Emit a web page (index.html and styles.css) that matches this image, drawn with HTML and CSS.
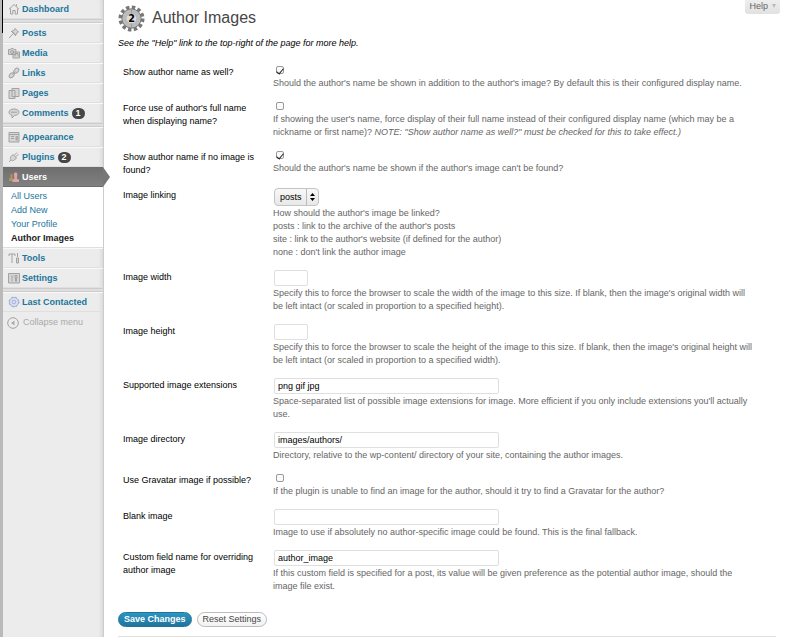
FILE: index.html
```html
<!DOCTYPE html>
<html lang="en">
<head>
<meta charset="utf-8">
<title>Author Images</title>
<link rel="stylesheet" href="styles.css">
</head>
<body>
<nav class="sidebar" aria-label="Main menu">
  <ul class="menu">
    <li><a href="#"><svg class="icon" viewBox="0 0 12 12"><path d="M1 6.2 6 1.5l5 4.7M2.5 5.5V11h2.3V7.5h2.4V11h2.3V5.5"/><path d="M8.5 1.2v2"/></svg>Dashboard</a></li>
    <li class="separator"></li>
    <li><a href="#"><svg class="icon" viewBox="0 0 12 12"><path class="tint" d="M7 1.5 10.5 5 9 5.5 7.8 8 4 4.200l2.500-1.200z"/><path d="M3 4l5 5M5 7 1 11"/></svg>Posts</a></li>
    <li><a href="#"><svg class="icon" viewBox="0 0 12 12"><path class="tint" d="M.5 2.500h2l.7-1h2l.7 1h2v5h-7.400zM5 5h6.500v6H5z"/><circle cx="4" cy="5" r="1.500"/><path d="M7 9.500V6.500h3v3"/></svg>Media</a></li>
    <li><a href="#"><svg class="icon" viewBox="0 0 12 12"><ellipse class="tint" cx="8.300" cy="3.700" rx="3" ry="1.900" transform="rotate(-45 8.300 3.700)"/><ellipse class="tint" cx="3.700" cy="8.300" rx="3" ry="1.900" transform="rotate(-45 3.700 8.300)"/><path d="m4.500 7.500 3-3"/></svg>Links</a></li>
    <li><a href="#"><svg class="icon" viewBox="0 0 12 12"><path class="tint" d="M1 3.500h6v8H1zM4 1.500h7v8H4z"/></svg>Pages</a></li>
    <li><a href="#"><svg class="icon" viewBox="0 0 12 12"><path class="tint" d="M6 2c3 0 5 1.300 5 3.200S9 8.500 6.500 8.500L4 11V8.300C2 7.800 1 6.700 1 5.200 1 3.300 3 2 6 2z"/><path d="M3 5.200h6"/></svg>Comments <span class="badge">1</span></a></li>
    <li class="separator"></li>
    <li><a href="#"><svg class="icon" viewBox="0 0 12 12"><path class="tint" d="M1 1.500h10v9.500H1z"/><path d="M1 3.500h10M3 5.500h3M3 7.500h3"/><path class="fill" d="M7.500 5h2.500v4.500H7.500z"/></svg>Appearance</a></li>
    <li><a href="#"><svg class="icon" viewBox="0 0 12 12"><path class="tint" d="M5 3.500 8.500 7 6.500 9C5 10 3.500 9.500 3 9S2 7 3 5.500z"/><path d="M6 4.500 9 1.500M7.500 6l3-3M3 9l-2 2"/></svg>Plugins <span class="badge">2</span></a></li>
    <li class="current"><a href="#" aria-current="true"><svg class="icon users" viewBox="0 0 12 12"><path class="back" d="M1 10V8l1.500-1.500V3h2v4L6 10z"/><path class="front" d="M4.500 11V8.800L6.500 7.500 6 5V2.500C6.300 1 9 1 9.300 2.500V5l-.5 2.500 2.200 1.300V11z"/></svg>Users</a>
      <ul class="submenu">
        <li><a href="#">All Users</a></li>
        <li><a href="#">Add New</a></li>
        <li><a href="#">Your Profile</a></li>
        <li><a href="#" class="selected">Author Images</a></li>
      </ul>
    </li>
    <li><a href="#"><svg class="icon" viewBox="0 0 12 12"><path d="M1 4V2h6v2M4 2v9"/><path class="tint" d="M9.500 1v4M8.500 6h2v5h-2z"/></svg>Tools</a></li>
    <li><a href="#"><svg class="icon" viewBox="0 0 12 12"><path class="tint" d="M.5 1.500h11v9.500H.5z"/><path d="M3 3.500l1 1 1-1M4 4.500V9.500M7.500 9.500V6M7 3.500h2v2.500H7zM8.500 6v3.500"/></svg>Settings</a></li>
    <li class="separator"></li>
    <li><a href="#"><svg class="icon gear" viewBox="0 0 12 12"><circle cx="6" cy="6" r="4.500"/><circle class="teeth" cx="6" cy="6" r="5"/><circle cx="6" cy="6" r="1.800"/></svg>Last Contacted</a></li>
  </ul>
  <button type="button" class="collapse"><svg class="icon" viewBox="0 0 12 12"><circle cx="6" cy="6" r="5.300"/><path class="fill" d="M7.500 3.500v5L4 6z"/></svg>Collapse menu</button>
</nav>
<main class="content">
  <button type="button" class="help">Help <span class="caret"></span></button>
  <header class="heading">
    <svg class="logo" viewBox="0 0 28 28" aria-hidden="true"><circle class="cogs" cx="14" cy="14" r="11.500"/><circle class="disc" cx="14" cy="14" r="10"/><path class="split" d="M14 4v5M14 19v5"/><circle class="hub" cx="14" cy="14" r="5"/><text x="14" y="17.500">2</text></svg>
    <h1>Author Images</h1>
  </header>
  <p class="intro">See the "Help" link to the top-right of the page for more help.</p>
  <form>
    <div class="row"><label for="show">Show author name as well?</label><div class="field"><div class="check"><input type="checkbox" id="show" checked></div><p>Should the author's name be shown in addition to the author's image? By default this is their configured display name.</p></div></div>
    <div class="row"><label for="force">Force use of author's full name when displaying name?</label><div class="field"><div class="check"><input type="checkbox" id="force"></div><p>If showing the user's name, force display of their full name instead of their configured display name (which may be a nickname or first name)? <em>NOTE: "Show author name as well?" must be checked for this to take effect.)</em></p></div></div>
    <div class="row"><label for="noimage">Show author name if no image is found?</label><div class="field"><div class="check"><input type="checkbox" id="noimage" checked></div><p>Should the author's name be shown if the author's image can't be found?</p></div></div>
    <div class="row"><label for="linking">Image linking</label><div class="field"><div class="picker"><select id="linking"><option>posts</option><option>site</option><option>none</option></select><svg viewBox="0 0 5 8" aria-hidden="true"><path d="M0 3 2.500 0 5 3zM0 5l2.500 3L5 5z"/></svg></div><p>How should the author's image be linked?<br>posts : link to the archive of the author's posts<br>site : link to the author's website (if defined for the author)<br>none : don't link the author image</p></div></div>
    <div class="row"><label for="width">Image width</label><div class="field"><input class="text short" type="text" id="width"><p>Specify this to force the browser to scale the width of the image to this size. If blank, then the image's original width will be&nbsp;left&nbsp;intact (or scaled in proportion to a specified height).</p></div></div>
    <div class="row"><label for="height">Image height</label><div class="field"><input class="text short" type="text" id="height"><p>Specify this to force the browser to scale the height of the image to this size. If blank, then the image's original height will be&nbsp;left&nbsp;intact (or scaled in proportion to a specified width).</p></div></div>
    <div class="row"><label for="ext">Supported image extensions</label><div class="field"><input class="text" type="text" id="ext" value="png gif jpg"><p>Space-separated list of possible image extensions for image. More efficient if you only include extensions you'll actually use.</p></div></div>
    <div class="row"><label for="dir">Image directory</label><div class="field"><input class="text" type="text" id="dir" value="images/authors/"><p>Directory, relative to the wp-content/ directory of your site, containing the author images.</p></div></div>
    <div class="row"><label for="gravatar">Use Gravatar image if possible?</label><div class="field"><div class="check"><input type="checkbox" id="gravatar"></div><p>If the plugin is unable to find an image for the author, should it try to find a Gravatar for the author?</p></div></div>
    <div class="row"><label for="blank">Blank image</label><div class="field"><input class="text" type="text" id="blank"><p>Image to use if absolutely no author-specific image could be found. This is the final fallback.</p></div></div>
    <div class="row"><label for="custom">Custom field name for overriding author image</label><div class="field"><input class="text" type="text" id="custom" value="author_image"><p>If this custom field is specified for a post, its value will be given preference as the potential author image, should the image&nbsp;file&nbsp;exist.</p></div></div>
    <div class="actions"><button type="submit" class="primary">Save Changes</button><button type="reset">Reset Settings</button></div>
  </form>
</main>
</body>
</html>
```
FILE: styles.css
```css
* { box-sizing: border-box; }
body {
  margin: 0;
  display: flex;
  min-height: 100vh;
  overflow: hidden;
  background: #fff;
  color: #000;
  font: 9px/13px "Liberation Sans", Arial, sans-serif;
}
ul { margin: 0; padding: 0; list-style: none; }
p { margin: 0; }
a { text-decoration: none; color: #21759b; }
button, input, select { font: inherit; color: inherit; margin: 0; }

.sidebar {
  position: relative;
  flex: none;
  width: 104px;
  border-left: 3px solid #bababa;
  border-right: 1px solid #ccc;
  background: #ececec;
  box-shadow: inset -4px 0 4px -3px #d0d0d0;
}
.sidebar::before {
  content: "";
  position: absolute;
  left: -1px;
  top: 0;
  width: 1px;
  height: 33px;
  background: #000;
}
.menu > li > a {
  display: flex;
  align-items: center;
  gap: 2px;
  height: 20px;
  padding-left: 5px;
  border-top: 1px solid #f9f9f9;
  border-bottom: 1px solid #dfdfdf;
  font-weight: bold;
}
.menu > li:first-child > a { height: 19px; border-top: 0; }
.separator {
  height: 4px;
  background: #dfdfdf;
  border-top: 1px solid #ccc;
  border-bottom: 1px solid #ccc;
}
.icon {
  flex: none;
  width: 12px;
  height: 12px;
  fill: none;
  stroke: #a2a2a2;
  stroke-width: 1;
}
.icon .tint { fill: #d6d6d6; }
.icon .fill { fill: #aaa; stroke: none; }
.gear { stroke: #a4b1d4; fill: #dbe1f2; }
.gear .teeth { stroke-dasharray: 2 2; fill: none; }
.users { stroke: none; }
.users .back { fill: #a89a58; }
.users .front { fill: #e0a3a0; }
.badge {
  height: 11px;
  margin-left: 1px;
  padding: 0 4px;
  border-radius: 6px;
  background: #464646;
  color: #fff;
  line-height: 11px;
}
.menu > .current > a {
  position: relative;
  background: linear-gradient(#6f6f6f, #808080);
  border-color: #6d6d6d;
  color: #fff;
}
.current > a::after {
  content: "";
  position: absolute;
  left: 100%;
  top: -1px;
  border: solid transparent;
  border-width: 10px 0 10px 7px;
  border-left-color: #777;
}
.submenu {
  padding: 2px 0;
  background: #fff;
  border-bottom: 1px solid #dfdfdf;
}
.submenu a { display: block; padding-left: 8px; line-height: 14px; }
.submenu .selected { color: #222; font-weight: bold; }
.collapse {
  display: flex;
  align-items: center;
  gap: 4px;
  height: 21px;
  padding: 0 4px;
  border: 0;
  background: none;
  color: #aaa;
}

.content {
  position: relative;
  flex: 1;
  min-width: 0;
  padding: 4px 10px 0 14px;
}
.help {
  position: absolute;
  top: 0;
  right: 12px;
  display: flex;
  align-items: center;
  gap: 4px;
  height: 14px;
  padding: 0 4px 2px;
  border: 0;
  border-radius: 0 0 3px 3px;
  background: linear-gradient(#eee, #e1e1e1);
  color: #666;
}
.caret { border: solid transparent; border-width: 4px 2px 0; border-top-color: #bbb; }
.heading { display: flex; align-items: center; gap: 7px; height: 28px; }
.logo { width: 27px; height: 27px; }
.cogs { fill: none; stroke: #777; stroke-width: 4; stroke-dasharray: 3.500 2.520; }
.disc { fill: #bbb; stroke: #777; stroke-width: 1; }
.split { stroke: #999; }
.hub { fill: #ddd; }
.logo text { font: bold 10px "DejaVu Sans", sans-serif; text-anchor: middle; fill: #000; }
h1 { margin: 0; font-size: 16px; font-weight: normal; line-height: 24px; color: #464646; }
.intro { margin: 5px 0 9px; font-style: italic; }

.row { display: flex; }
.row > label { flex: none; width: 150px; padding: 7px 5px 5px; }
.field { flex: 1; min-width: 0; padding: 5px; color: #666; }
.field p { padding-right: 11px; }
.check { display: flex; align-items: center; height: 13px; padding: 0 3px 1px; }
.check input {
  appearance: none;
  display: grid;
  place-items: center;
  width: 8px;
  height: 8px;
  border: 1px solid #999;
  border-radius: 2px;
  background: #fafafa;
}
.check input:checked::after {
  content: "";
  width: 3px;
  height: 6px;
  border: solid #222;
  border-width: 0 1px 1px 0;
  transform: rotate(40deg);
}
.text {
  display: block;
  width: 225px;
  height: 16px;
  margin: 1px;
  padding: 0 3px;
  border: 1px solid #dfdfdf;
  border-radius: 2px;
  background: #fff;
  color: #000;
}
.short { width: 34px; }
.picker { position: relative; width: 47px; height: 20px; padding: 1px; }
.picker select {
  appearance: none;
  display: block;
  width: 100%;
  height: 18px;
  padding: 0 5px;
  border: 1px solid #c4c4c4;
  border-radius: 4px;
  background: linear-gradient(90deg, transparent 31px, #bbb 31px, #bbb 32px, transparent 32px), linear-gradient(#f8f8f8, #e8e8e8);
  color: #000;
}
.picker svg { position: absolute; right: 5px; top: 6px; width: 5px; height: 8px; pointer-events: none; }
.actions { display: flex; gap: 5px; padding: 14px 0 9px; margin-right: 6px; border-bottom: 1px solid #dfdfdf; }
.actions button {
  height: 15px;
  padding: 0 5px;
  border: 1px solid #bbb;
  border-radius: 8px;
  background: linear-gradient(#fff, #f2f2f2);
  color: #464646;
  line-height: 13px;
}
.actions .primary { border-color: #21759b; background: linear-gradient(#2a95c5, #21759b); color: #fff; font-weight: bold; }
```
